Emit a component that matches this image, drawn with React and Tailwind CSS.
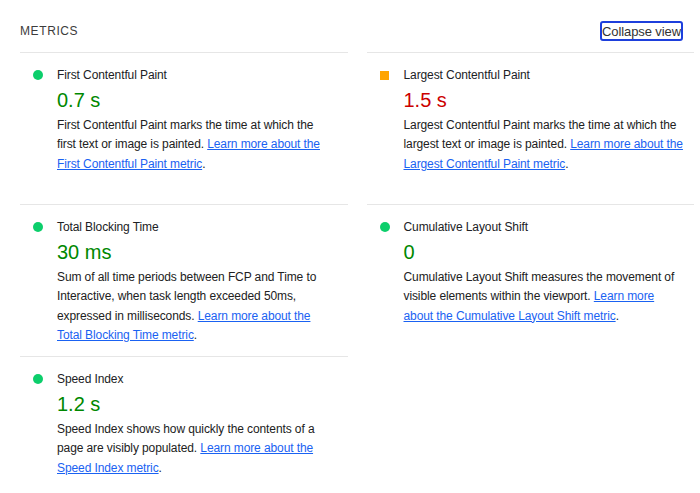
import React from "react";

const metrics = [
  {
    title: "First Contentful Paint",
    value: "0.7 s",
    status: "pass",
    text: "First Contentful Paint marks the time at which the first text or image is painted. ",
    link: "Learn more about the First Contentful Paint metric",
  },
  {
    title: "Largest Contentful Paint",
    value: "1.5 s",
    status: "average",
    text: "Largest Contentful Paint marks the time at which the largest text or image is painted. ",
    link: "Learn more about the Largest Contentful Paint metric",
  },
  {
    title: "Total Blocking Time",
    value: "30 ms",
    status: "pass",
    text: "Sum of all time periods between FCP and Time to Interactive, when task length exceeded 50ms, expressed in milliseconds. ",
    link: "Learn more about the Total Blocking Time metric",
  },
  {
    title: "Cumulative Layout Shift",
    value: "0",
    status: "pass",
    text: "Cumulative Layout Shift measures the movement of visible elements within the viewport. ",
    link: "Learn more about the Cumulative Layout Shift metric",
  },
  {
    title: "Speed Index",
    value: "1.2 s",
    status: "pass",
    text: "Speed Index shows how quickly the contents of a page are visibly populated. ",
    link: "Learn more about the Speed Index metric",
  },
];

function Metric({ m, left }) {
  const pass = m.status === "pass";
  return (
    <div
      className={
        "h-[152px] border-t border-[#e6e6e6] pt-[12px] pb-[10px] " +
        (left ? "pr-[20px]" : "pr-[9.5px]")
      }
    >
      <div className="flex items-center h-[20px]">
        <div className="w-[37px] flex pl-[13px]">
          {pass ? (
            <span className="block w-[10px] h-[10px] rounded-full bg-[#0cce6b]" />
          ) : (
            <span className="block w-[9px] h-[9px] bg-[#ffa400]" />
          )}
        </div>
        <span className="text-[12px] tracking-[-0.1px] text-[#202124]">{m.title}</span>
      </div>
      <div className="pl-[37px]">
        <div
          className={
            "mt-[3px] text-[20px] leading-[24px] " +
            (pass ? "text-[#008800]" : "text-[#cc0000]")
          }
        >
          {m.value}
        </div>
        <p className="mt-[3.5px] text-[12px] leading-[19.5px] tracking-[-0.1px] text-[#212121]">
          {m.text}
          <a href="#" className="text-[#1a62f2] underline">
            {m.link}
          </a>
          .
        </p>
      </div>
    </div>
  );
}

export default function App() {
  return (
    <div
      className="w-[700px] h-[493px] overflow-hidden bg-white pl-[20px] pr-[6px]"
      style={{ fontFamily: '"Liberation Sans", Arial, sans-serif' }}
    >
      <div className="h-[52px] pt-[10px] flex items-center justify-between pr-[11px]">
        <span className="text-[12px] tracking-[0.05em] text-[#3c3c3c]">METRICS</span>
        <button className="h-[20px] w-[83px] border-2 border-[#1d3fdc] rounded-[3px] text-[13px] leading-none tracking-[-0.1px] text-[#333] whitespace-nowrap flex items-center justify-center overflow-visible">
          Collapse view
        </button>
      </div>
      <div className="grid grid-cols-2 gap-x-[19px]">
        {metrics.map((m, i) => (
          <Metric key={m.title} m={m} left={i % 2 === 0} />
        ))}
      </div>
    </div>
  );
}
